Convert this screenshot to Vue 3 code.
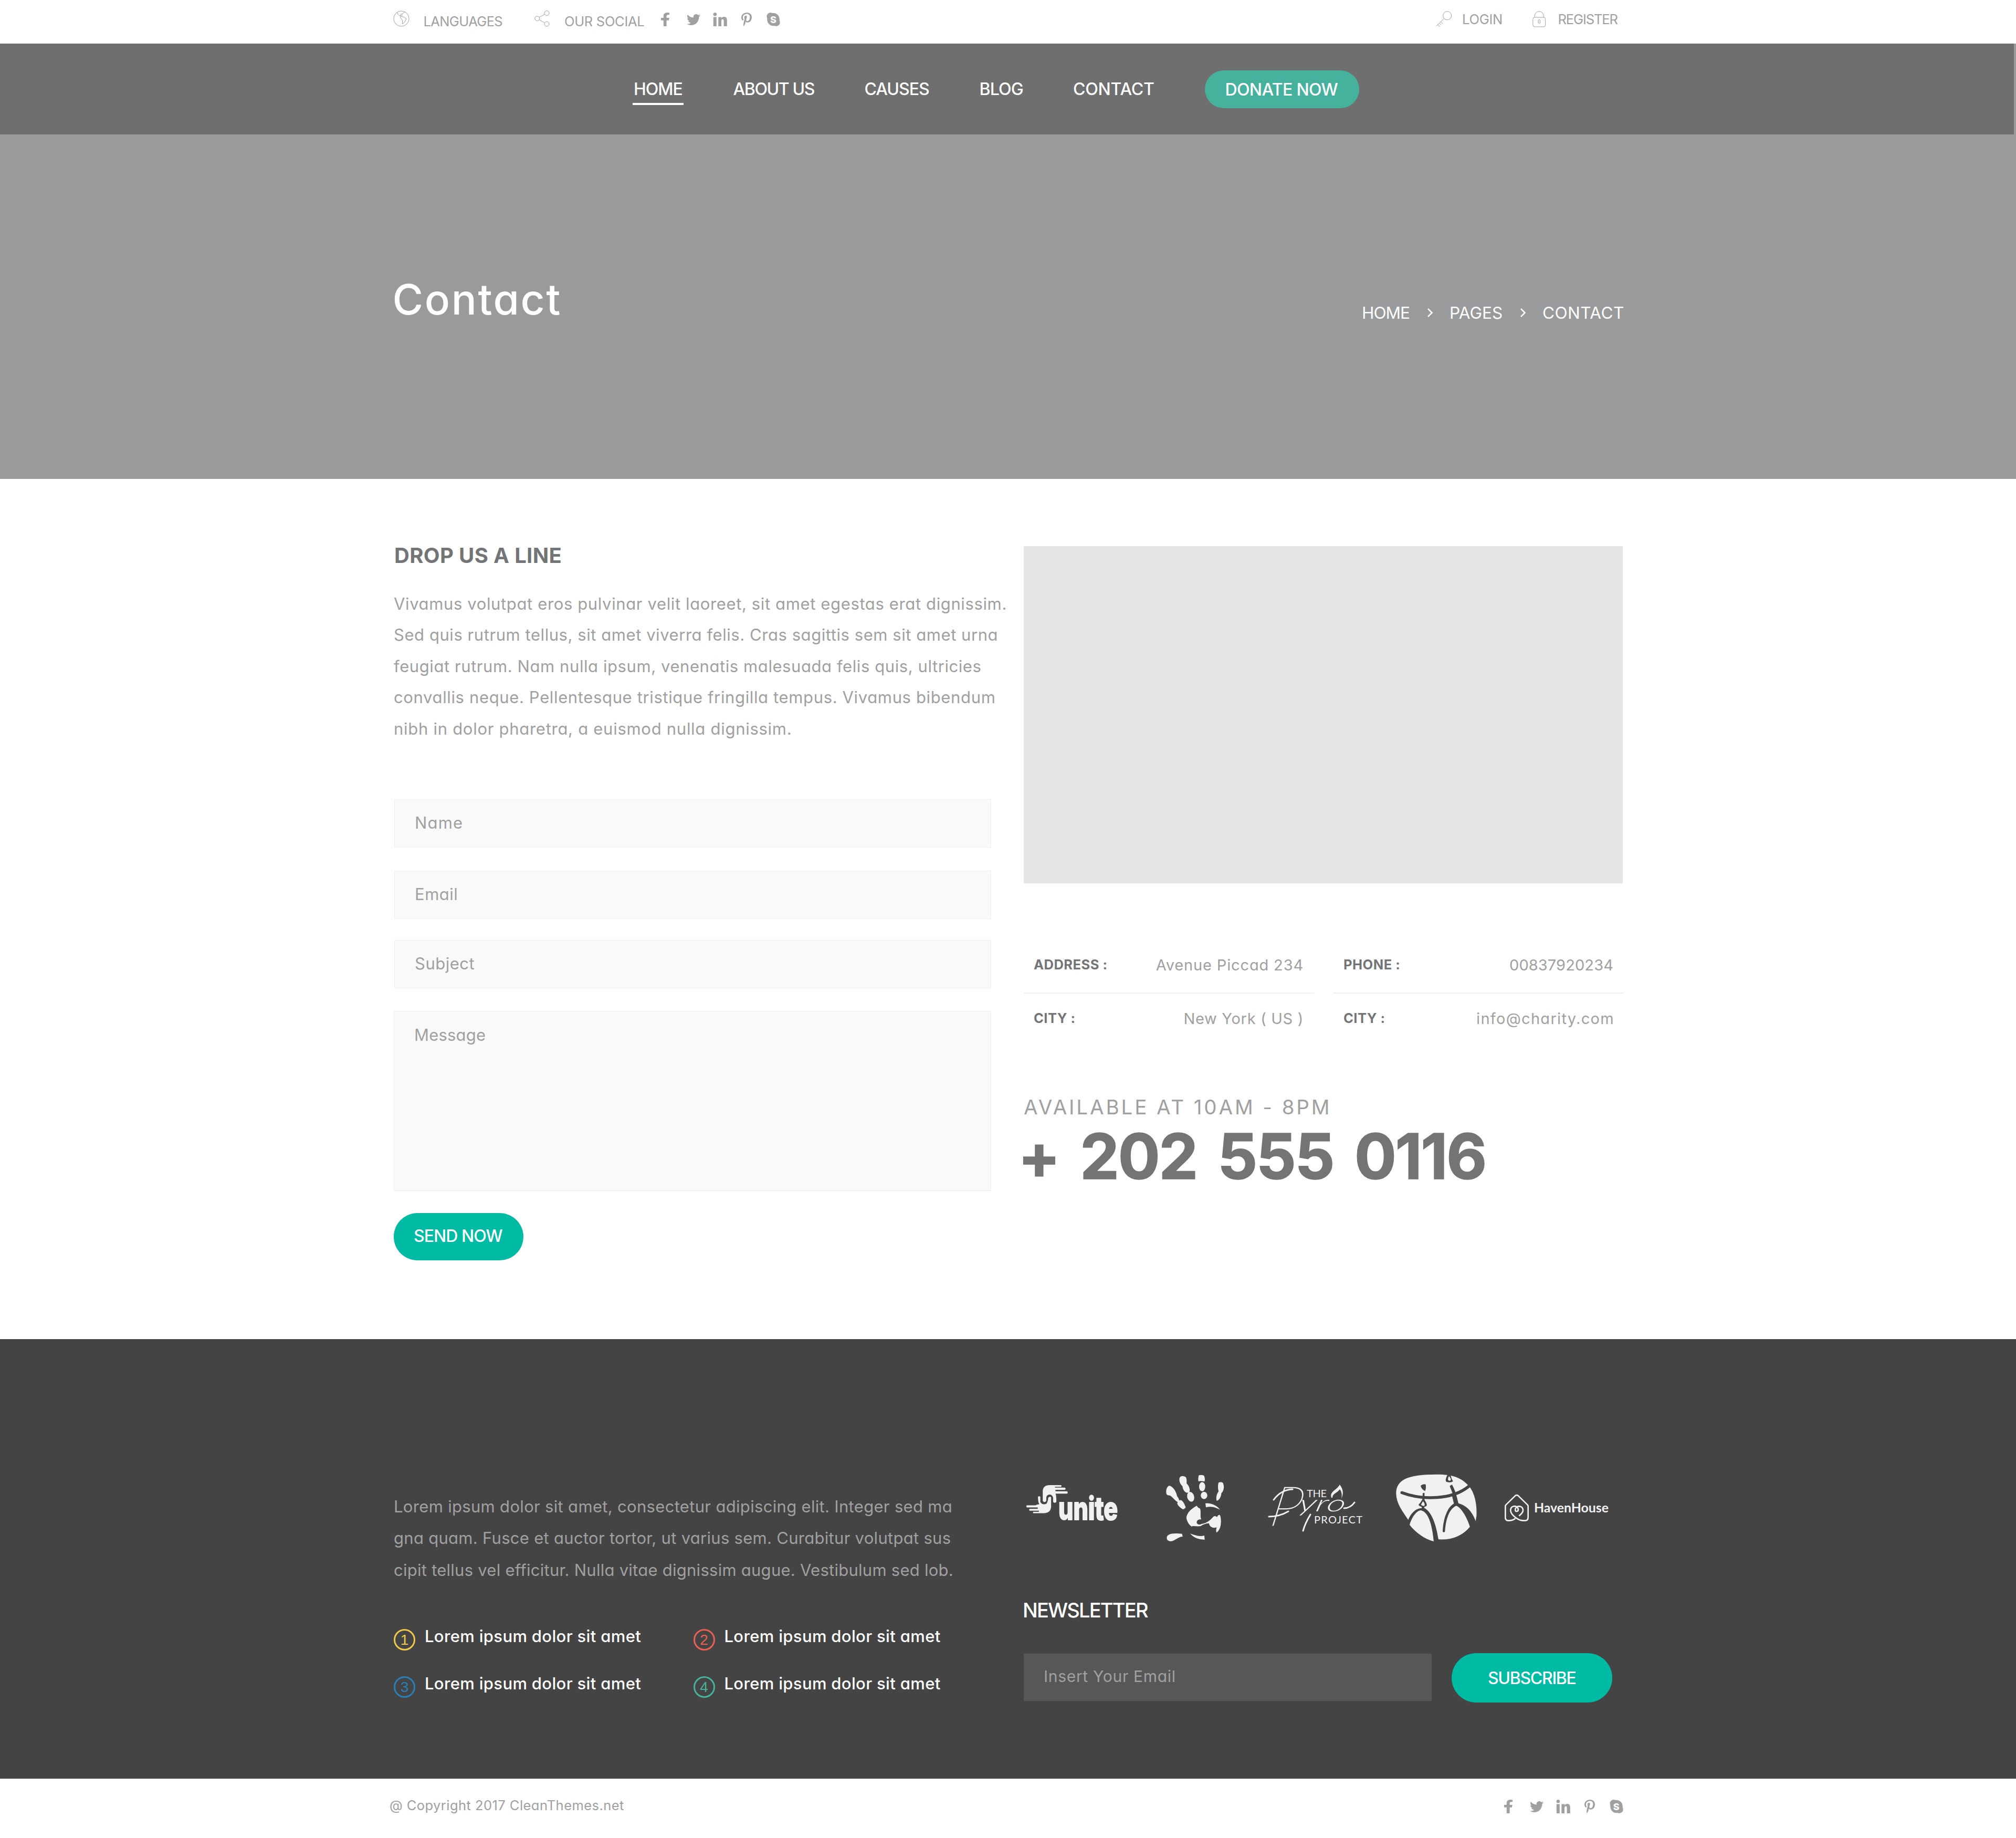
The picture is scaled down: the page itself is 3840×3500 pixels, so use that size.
<script setup>
import { h } from 'vue'

const navItems = [
  { label: 'HOME', track: -1, active: true },
  { label: 'ABOUT US', track: -1.4 },
  { label: 'CAUSES', track: -1 },
  { label: 'BLOG', track: -0.85 },
  { label: 'CONTACT', track: -0.2 },
]

const introLines = [
  { text: 'Vivamus volutpat eros pulvinar velit laoreet, sit amet egestas erat dignissim.', track: 0.63 },
  { text: 'Sed quis rutrum tellus, sit amet viverra felis. Cras sagittis sem sit amet urna', track: 0.56 },
  { text: 'feugiat rutrum. Nam nulla ipsum, venenatis malesuada felis quis, ultricies', track: 0.58 },
  { text: 'convallis neque. Pellentesque tristique fringilla tempus. Vivamus bibendum', track: 0.64 },
  { text: 'nibh in dolor pharetra, a euismod nulla dignissim.', track: 0.72 },
]

const aboutLines = [
  { text: 'Lorem ipsum dolor sit amet, consectetur adipiscing elit. Integer sed ma', track: 0.32 },
  { text: 'gna quam. Fusce et auctor tortor, ut varius sem. Curabitur volutpat sus', track: 0.29 },
  { text: 'cipit tellus vel efficitur. Nulla vitae dignissim augue. Vestibulum sed lob.', track: 0.26 },
]

const details = [
  { label: 'ADDRESS :', value: 'Avenue Piccad 234', track: 0.85 },
  { label: 'PHONE :', value: '00837920234', track: 0.1 },
  { label: 'CITY :', value: 'New York ( US )', track: 0.7 },
  { label: 'CITY :', value: 'info@charity.com', track: 1.3 },
]

const features = [
  { n: 1, color: '#f2c94c' },
  { n: 2, color: '#ea6153' },
  { n: 3, color: '#2980b9' },
  { n: 4, color: '#46b29d' },
]

const SocialIcons = () => [
  h('svg', { class: 'si', width: 16, height: 26, viewBox: '22 0 275 512', preserveAspectRatio: 'none' }, [
    h('path', { d: 'M279.14 288l14.22-92.66h-88.91v-60.13c0-25.35 12.42-50.06 52.24-50.06h40.42V6.26S260.43 0 225.36 0c-73.22 0-121.08 44.38-121.08 124.72v70.62H22.89V288h81.39v224h100.17V288z' }),
  ]),
  h('svg', { class: 'si', width: 26, height: 21, viewBox: '0 48 512 416', preserveAspectRatio: 'none' }, [
    h('path', { d: 'M459.37 151.716c.325 4.548.325 9.097.325 13.645 0 138.72-105.583 298.558-298.558 298.558-59.452 0-114.68-17.219-161.137-47.106 8.447.974 16.568 1.299 25.34 1.299 49.055 0 94.213-16.568 130.274-44.832-46.132-.975-84.792-31.188-98.112-72.772 6.498.974 12.995 1.624 19.818 1.624 9.421 0 18.843-1.3 27.614-3.573-48.081-9.747-84.143-51.98-84.143-102.985v-1.299c13.969 7.797 30.214 12.67 47.431 13.319-28.264-18.843-46.781-51.005-46.781-87.391 0-19.492 5.197-37.36 14.294-52.954 51.655 63.675 129.3 105.258 216.365 109.807-1.624-7.797-2.599-15.918-2.599-24.04 0-57.828 46.782-104.934 104.934-104.934 30.213 0 57.502 12.67 76.67 33.137 23.715-4.548 46.456-13.32 66.599-25.34-7.798 24.366-24.366 44.833-46.132 57.827 21.117-2.273 41.584-8.122 60.426-16.243-14.292 20.791-32.161 39.308-52.628 54.253z' }),
  ]),
  h('svg', { class: 'si', width: 27, height: 26, viewBox: '0 0 27 26' }, [
    h('circle', { cx: 3.9, cy: 3.3, r: 3.3 }),
    h('path', { d: 'M.8 8.5h6V26h-6zM10.3 8.5h5.6v2.4c1-1.8 2.9-2.8 5.2-2.8 4.5 0 5.7 2.8 5.7 7.3V26h-6.2v-9.400c0-2.200-.3-4-2.200-4s-2.400 1.700-2.400 4V26h-5.700z' }),
  ]),
  h('svg', { class: 'si', width: 20, height: 26, viewBox: '0 6 384 500', preserveAspectRatio: 'none' }, [
    h('path', { d: 'M204 6.5C101.4 6.5 0 74.9 0 185.6 0 256 39.6 296 63.6 296c9.9 0 15.6-27.6 15.6-35.4 0-9.3-23.7-29.1-23.7-67.8 0-80.4 61.2-137.4 140.4-137.4 68.1 0 118.5 38.7 118.5 109.8 0 53.1-21.3 152.7-90.3 152.7-24.9 0-46.2-18-46.2-43.8 0-37.8 26.4-74.4 26.4-113.4 0-66.2-93.9-54.2-93.9 25.8 0 16.8 2.1 35.4 9.6 50.7-13.8 59.4-42 147.900-42 209.100 0 18.900 2.700 37.500 4.500 56.400 3.400 3.800 1.700 3.400 6.900 1.500 50.400-69 48.600-82.500 71.400-172.800 12.300 23.400 44.100 36 69.300 36 106.200 0 153.900-103.500 153.900-196.800C384 71.300 298.200 6.500 204 6.500z' }),
  ]),
  h('svg', { class: 'si', width: 26, height: 26, viewBox: '0 0 26 26' }, [
    h('ellipse', { cx: 13, cy: 13, rx: 11.8, ry: 12.2 }),
    h('circle', { cx: 7.6, cy: 7.3, r: 7.2 }),
    h('circle', { cx: 18.4, cy: 18.7, r: 7.2 }),
    h('text', { x: 13, y: 19.5, 'text-anchor': 'middle', 'font-size': 18, 'font-weight': 800, fill: '#fff' }, 'S'),
  ]),
]
</script>

<template>
  <div class="page">
    <header class="topbar">
      <div class="top-left">
        <svg class="line globe" width="31" height="31" viewBox="0 0 31 31">
          <circle cx="15.500" cy="15.500" r="14.600" />
          <path d="M7.500 3C8.500 8 11 9.500 13 9.500l1 4 1.300 2.500 2.500 3.300-.5 6 4.100-2.600L25 16l-3.600-3.300-6.400-1.500M17 6.500C19 4 22 3.500 23 2M13.500 9.500l1-2.500 2-.5 1 2-1.500 1.500z" />
        </svg>
        <span class="t-lang">LANGUAGES</span>
        <svg class="line" width="29" height="31" viewBox="0 0 29 31">
          <circle cx="23.500" cy="5" r="4.500" /><circle cx="5.200" cy="15.300" r="4.500" /><circle cx="23.500" cy="25.500" r="4.500" />
          <path d="M19.500 7.200L9 13M9 17.500l10.500 6" />
        </svg>
        <span class="t-social">OUR SOCIAL</span>
        <div class="socials"><SocialIcons /></div>
      </div>
      <div class="top-right">
        <svg class="line" width="31" height="31" viewBox="0 0 31 31">
          <circle cx="21.700" cy="8.800" r="8" />
          <path d="M15.600 14.400L.5 29M9.500 20.500l3.800 3.800M6.700 23.200l3.500 3.500M4 26l3.500 4" />
        </svg>
        <span class="t-login">LOGIN</span>
        <svg class="line lock" width="26" height="31" viewBox="0 0 26 31">
          <path d="M4 12v-2.500a8.700 8.700 0 0 1 17.400 0V12" />
          <rect x=".8" y="12" width="23.800" height="18" rx="3.500" /><rect x="11" y="16.500" width="3.400" height="7" rx="1.500" />
        </svg>
        <span class="t-register">REGISTER</span>
      </div>
    </header>

    <section class="hero">
      <nav class="nav">
        <a v-for="item in navItems" :key="item.label" :class="{ active: item.active }" :style="{ letterSpacing: item.track + 'px' }">{{ item.label }}</a>
        <a class="donate">DONATE NOW</a>
      </nav>
      <div class="hero-body">
        <h1>Contact</h1>
        <div class="crumbs">
          <span class="c-home">HOME</span>
          <svg class="chev" width="13" height="17" viewBox="0 0 13 17"><path d="M2 1l7.500 7.500L2 16" /></svg>
          <span>PAGES</span>
          <svg class="chev" width="13" height="17" viewBox="0 0 13 17"><path d="M2 1l7.500 7.500L2 16" /></svg>
          <span class="c-contact">CONTACT</span>
        </div>
      </div>
    </section>

    <main class="main">
      <div class="left">
        <h2>DROP US A LINE</h2>
        <p class="intro"><span v-for="line in introLines" :key="line.text" :style="{ letterSpacing: line.track + 'px' }">{{ line.text }}</span></p>
        <div class="field name">Name</div>
        <div class="field email">Email</div>
        <div class="field subject">Subject</div>
        <div class="field message">Message</div>
        <div class="send">SEND NOW</div>
      </div>
      <div class="right">
        <div class="map"></div>
        <div class="details">
          <div v-for="(d, i) in details" :key="i" class="detail">
            <b>{{ d.label }}</b><span :style="{ letterSpacing: d.track + 'px' }">{{ d.value }}</span>
          </div>
        </div>
        <div class="avail">AVAILABLE AT 10AM - 8PM</div>
        <div class="phone">+ 202 555 0116</div>
      </div>
    </main>

    <footer class="footer">
      <div class="f-left">
        <p class="about"><span v-for="line in aboutLines" :key="line.text" :style="{ letterSpacing: line.track + 'px' }">{{ line.text }}</span></p>
        <div class="features">
          <div v-for="f in features" :key="f.n" class="feature">
            <i :style="{ color: f.color }">{{ f.n }}</i><span>Lorem ipsum dolor sit amet</span>
          </div>
        </div>
      </div>
      <div class="f-right">
        <div class="logos">
          <svg width="260" height="140" viewBox="0 0 260 140">
            <g transform="translate(-20 -20) scale(.44643 .33333)">
              <path d="M126 210V175Q128 145 155 144H204Q208 149 204 154H178V158H220Q227 165 220 171H180V179H230Q235 186 230 193H181V195Q184 205 184 240Q177 250 170 240V215Q166 198 155 198Q142 200 141 215V235Q133 248 126 235Z" />
              <path class="cut" d="M104 210Q110 202 117 210V240Q124 256 140 250Q146 240 148 215Q156 205 163 212V270Q160 303 135 306H85Q80 300 85 295H108V292H70Q62 285 70 278H103V273H57Q52 264 57 258H95Q100 252 109 252Q104 240 104 210Z" />
            </g>
            <text class="unite" x="66" y="94" textLength="113" lengthAdjust="spacingAndGlyphs">unite</text>
          </svg>
          <svg width="190" height="140" viewBox="0 0 190 140">
            <g transform="translate(-280 -20) scale(.44643 .33333)">
              <path d="M653 190C650 165 660 145 668 148C690 160 697 195 699 207C708 222 712 240 705 243C690 235 680 210 668 203C655 203 653 195 653 190Z" />
              <path d="M712 230C722 228 730 250 736 272L726 283C712 275 698 255 700 245Q705 232 712 230Z" />
              <path d="M709 105C712 90 728 88 737 100C742 118 739 128 740 135C752 150 757 175 750 187C735 192 724 175 722 150C710 135 708 120 709 105Z" />
              <ellipse cx="757" cy="211" rx="15" ry="28" transform="rotate(-8 757 211)" />
              <path d="M792 88Q804 84 814 90Q820 110 816 124Q803 118 790 122Q788 100 792 88Z" />
              <ellipse cx="806" cy="153" rx="13" ry="26" /><ellipse cx="814" cy="203" rx="14" ry="21" />
              <path d="M876 130Q888 122 895 132C902 155 898 178 888 190C887 210 880 230 868 234C864 215 868 195 876 180C872 155 874 140 876 130Z" />
              <path d="M783 262Q788 275 797 278C803 300 795 325 803 340C790 338 782 345 783 360C787 372 797 372 803 366C825 362 840 345 852 327C860 315 866 325 870 326Q874 312 882 315C888 335 887 365 883 385Q878 405 868 415Q863 405 868 385C855 392 838 385 835 362C820 362 805 372 800 378C785 382 770 375 760 380C745 365 738 340 739 325C745 295 765 275 783 262Z" />
              <path d="M820 248C845 245 870 262 882 284C865 275 850 262 822 271Z" />
              <path d="M655 445C655 425 675 415 720 422L723 438C700 440 690 465 670 465C658 462 655 455 655 445Z" />
              <path d="M755 421C775 432 800 440 815 432L817 456C790 455 770 445 755 421Z" />
            </g>
          </svg>
          <svg width="250" height="140" viewBox="0 0 250 140">
            <text class="script big" transform="translate(16 105) skewX(-10)" textLength="58" lengthAdjust="spacingAndGlyphs">P</text>
            <text class="script" transform="translate(72 78) skewX(-14)" textLength="88" lengthAdjust="spacingAndGlyphs">yro</text>
            <path class="swash" d="M26 56C36 42 50 36 62 36M17 88C30 88 44 84 54 78M160 72C168 72 175 68 180 61M96 84C90 94 85 104 82 115" />
            <text class="caps" x="89" y="51" textLength="38">THE</text>
            <text class="caps" x="103" y="101" textLength="92">PROJECT</text>
            <path d="M136 52C132 40 146 38 152 27C158 36 160 43 155 54C157 45 155 40 152 36C146 44 138 44 138 52Z" />
          </svg>
          <svg width="210" height="140" viewBox="0 0 210 140">
            <g transform="translate(-50 -20) scale(.33333)">
              <path d="M178 195C176 118 235 82 410 83C520 83 560 110 600 157C630 200 640 260 637 320L632 350L600 382C560 430 500 460 420 454L393 466C340 452 290 415 255 371L247 342C215 295 180 250 178 195Z" />
              <path class="dark-line" d="M211 187C330 232 500 228 594 150" />
              <path class="dark" d="M247 342C262 305 290 278 318 276H342C380 300 405 360 420 456L393 468C385 380 365 295 318 288C290 292 265 335 255 371L240 360Z" />
              <path class="dark" d="M484 149L497 141C505 155 512 170 516 183L523 205L534 248C580 258 615 300 632 350L645 370L600 384C590 350 560 280 522 262C480 280 462 340 457 410Q450 416 444 410C446 340 470 270 508 250L498 208L500 190Z" />
              <path class="dark" d="M318 148Q330 136 347 140Q350 165 343 178Q322 168 318 148ZM330 190L340 188V228Q355 250 353 262Q345 268 339 268V280H324V268Q310 266 306 256Q318 245 328 225ZM472 83H488Q495 110 503 122Q490 132 465 125Q455 115 472 83Z" />
              <path d="M331 236Q345 250 340 262Q330 266 320 256ZM480 93Q495 108 489 118Q480 122 474 114Q474 100 480 93Z" />
            </g>
          </svg>
          <svg width="230" height="140" viewBox="0 0 230 140">
            <g transform="translate(-260 -20) scale(.33333)">
              <path class="house" d="M859 335C842 348 830 347 818 347Q802 347 802 328V264Q802 260 806 256L858 205Q867 198 876 205L928 256Q932 260 932 264V328Q932 347 915 347H905C870 347 832 310 832 288C832 262 860 260 870 271C880 282 876 294 867 294C857 294 855 280 865 271C876 260 903 264 903 288C903 300 890 312 880 320" />
            </g>
            <text class="haven" x="62" y="80" textLength="142" lengthAdjust="spacingAndGlyphs">HavenHouse</text>
          </svg>
        </div>
        <h3>NEWSLETTER</h3>
        <div class="subscribe">
          <div class="input">Insert Your Email</div>
          <div class="sub-btn">SUBSCRIBE</div>
        </div>
      </div>
    </footer>

    <div class="bottom">
      <span>@ Copyright 2017 CleanThemes.net</span>
      <div class="socials"><SocialIcons /></div>
    </div>
  </div>
</template>

<style>
body { margin: 0; background: #fff; }
</style>

<style scoped>
.page {
  width: 3840px; height: 3500px; overflow: hidden; background: #fff; color: #a0a0a0;
  font-family: Inter, sans-serif; font-feature-settings: "cv11"; white-space: nowrap; font-size: 31px;
}
.page * { box-sizing: border-box; }
h1, h2, h3, p { margin: 0; }

.topbar { height: 83px; padding-left: 749px; display: flex; font-size: 25.5px; }
.top-left { display: grid; grid-template-columns: 57.500px 211.5px 57px 184px 240px; align-content: start; padding-top: 20px; width: 1986px; line-height: 41px; }
.line { fill: none; stroke: #a0a0a0; stroke-width: 1; }
.t-lang { letter-spacing: -.62px; }
.t-social { letter-spacing: -.3px; }
.t-login { letter-spacing: -.25px; }
.t-register { letter-spacing: -1.1px; }
.top-right { display: grid; grid-template-columns: 50px 134px 48.500px 140px; align-content: start; padding-top: 21px; line-height: 31px; }
.socials { display: grid; grid-template-columns: 49px 49.500px 54px 48.500px 26px; height: 26px; margin-top: 4px; }
.socials :deep(.si) { display: block; fill: #a0a0a0; }
.socials :deep(.si:nth-child(2)) { margin-top: 3px; }

.hero { height: 829px; background: #999a9b; color: #fff; }
.nav {
  width: 3836px; height: 173px; background: #6f6f6f; padding-left: 1207px; display: grid;
  grid-template-columns: 189.500px 250px 219px 178.500px 250.500px 294.500px; align-items: center; font-size: 32px; font-weight: 500; line-height: 71px;
}
.nav a { position: relative; }
.nav .active::after { content: ""; position: absolute; left: -2px; top: 62px; width: 97px; height: 4px; background: #fff; }
.nav .donate { height: 72px; border-radius: 36px; background: #46b29d; padding: 1px 0 0 39px; letter-spacing: -.65px; }
.hero-body { display: flex; justify-content: space-between; padding: 274px 735px 0 747.500px; }
h1 { font-size: 80px; font-weight: 500; line-height: 80px; letter-spacing: 2.600px; }
.crumbs { display: grid; grid-template-columns: 124px 43px 134px 43px 167px; align-items: center; height: 40px; margin-top: 45px; font-size: 31.500px; }
.c-home { letter-spacing: -1px; }
.c-contact { letter-spacing: .47px; }
.chev { fill: none; stroke: #fff; stroke-width: 2.500; display: block; }

.main { height: 1638px; padding: 115px 0 0 750px; display: grid; grid-template-columns: 1200px 1143px; }
h2 { font-size: 40px; line-height: 62px; color: #737476; letter-spacing: .35px; padding-left: 1px; }
.intro { margin-top: 31px; margin-bottom: 105px; line-height: 59.400px; display: flex; flex-direction: column; }
.field { width: 1137px; margin-left: 1px; height: 92px; background: #f9f9f9; border: 1px solid #efefef; padding-left: 38px; line-height: 88px; letter-spacing: .5px; }
.name { height: 92px; line-height: 87px; letter-spacing: 1.200px; }
.email { margin-top: 44px; height: 92px; }
.subject { margin-top: 40px; }
.message { margin: 43px 0 0; width: 1138px; height: 343px; letter-spacing: .2px; line-height: 89px; }
.send {
  margin-top: 42px; width: 247px; height: 90px; border-radius: 45px; background: #00bba4; color: #fff;
  font-size: 32px; font-weight: 500; line-height: 88px; letter-spacing: -.950px; padding-left: 38px;
}
.map { margin-top: 13px; width: 1141px; height: 642px; background: #e6e6e6; }
.details { margin-top: 102px; display: grid; grid-template-columns: 553px 553px; column-gap: 37px; grid-template-rows: 108px 94px; }
.detail { display: flex; justify-content: space-between; align-items: center; padding: 0 20px 2px 19px; font-size: 29px; }
.detail b { font-size: 25.500px; color: #737476; letter-spacing: .5px; }
.detail:nth-child(-n+2) { border-bottom: 2px solid #efefef; }
.detail span { padding-top: 2px; }
.detail:last-child { padding-right: 18px; }
.avail { margin-top: 92px; font-size: 38.500px; line-height: 60px; letter-spacing: 3.900px; }
.phone {
  margin: 4px 0 0 -11px; font-size: 119px; font-weight: 700; line-height: 120px; letter-spacing: -2.500px; word-spacing: 14px;
  color: #737476; -webkit-text-stroke: 1.500px #737476;
}

.footer { height: 837px; background: #444; padding-left: 750px; display: grid; grid-template-columns: 1200px 1143px; }
.f-left { padding-top: 289px; }
.about { display: flex; flex-direction: column; line-height: 60.300px; }
.features { margin-top: 82px; display: grid; grid-template-columns: 570.500px 570px; grid-template-rows: 41px 41px; row-gap: 49.500px; }
.feature { display: flex; color: #fff; font-weight: 500; letter-spacing: .34px; line-height: 27px; }
.feature i {
  width: 41px; height: 41px; border: 3px solid currentColor; border-radius: 50%; font: 400 28px/35px "Liberation Sans", sans-serif;
  text-align: center; letter-spacing: 0; margin-right: 18px;
}
.f-right { padding-top: 250px; }
.logos { display: grid; grid-template-columns: 260px 190px 250px 210px 230px; height: 140px; fill: #f1f1f1; }
.cut { stroke: #444; stroke-width: 3; }
.unite { font-size: 60px; font-weight: 800; stroke: #f1f1f1; stroke-width: 2; stroke-linejoin: round; font-feature-settings: normal; }
.script { font-family: Lato, sans-serif; font-style: italic; font-weight: 300; font-size: 44px; }
.script.big { font-size: 104px; font-weight: 100; stroke: #f1f1f1; stroke-width: 1; }
.swash { fill: none; stroke: #f1f1f1; stroke-width: 3; stroke-linecap: round; }
.caps { font-family: Lato, sans-serif; font-size: 20px; }
.dark { fill: #444; }
.dark-line { fill: none; stroke: #444; stroke-width: 17; stroke-linecap: round; }
.house { fill: none; stroke: #f1f1f1; stroke-width: 8; stroke-linejoin: round; }
.haven { font-family: Lato, sans-serif; font-size: 24px; font-weight: 700; font-feature-settings: normal; }
h3 { margin-top: 101px; margin-left: -2px; font-size: 38px; font-weight: 500; line-height: 50px; letter-spacing: -1.800px; color: #fff; }
.subscribe { display: flex; margin-top: 57px; }
.input { margin-top: 1px; width: 777px; height: 90px; background: #575757; line-height: 87px; padding-left: 38px; font-size: 30px; letter-spacing: .7px; }
.sub-btn { margin-left: 38px; width: 306px; height: 94px; border-radius: 47px; background: #00bba4; color: #fff; font-size: 32px; font-weight: 500; letter-spacing: -1.300px; line-height: 96px; padding-left: 69px; }

.bottom { height: 113px; padding: 36px 748px 0 742px; display: flex; justify-content: space-between; font-size: 25.500px; line-height: 30px; letter-spacing: .450px; }
</style>
